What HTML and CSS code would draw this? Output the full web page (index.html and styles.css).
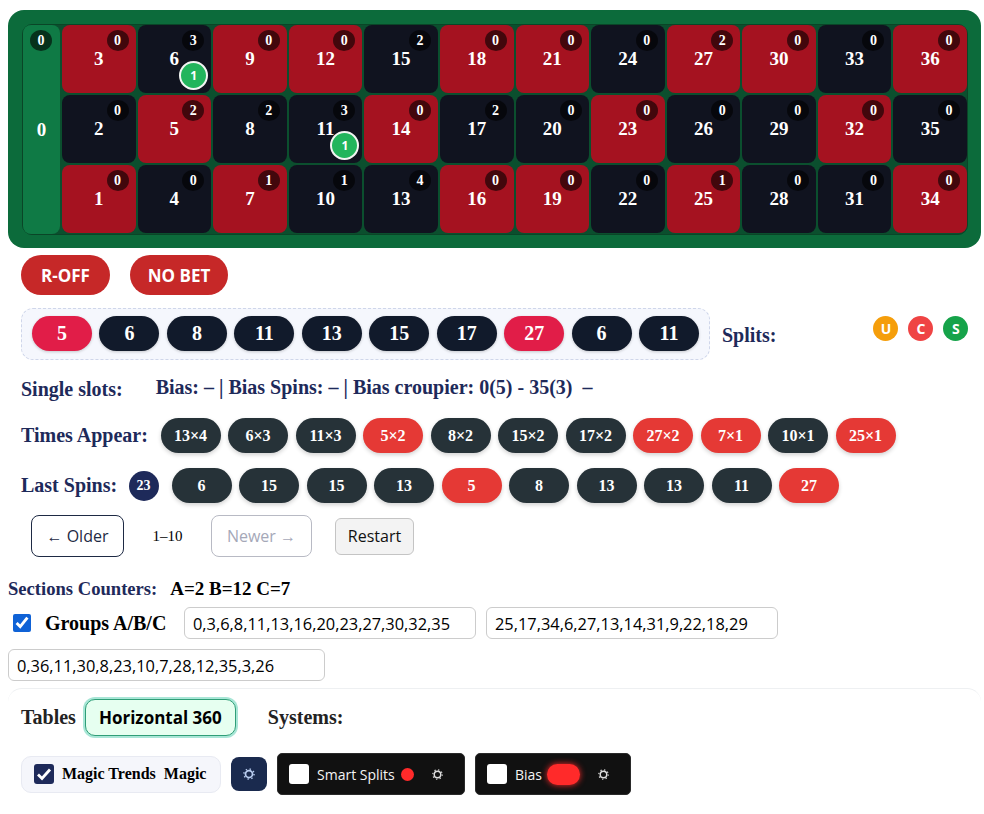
FILE: index.html
```html
<!DOCTYPE html>
<html lang="en">
<head>
    <meta charset="UTF-8">
    <meta name="viewport" content="width=device-width, initial-scale=1.0">
    <title>Roulette Tracker</title>
    <link rel="stylesheet" href="styles.css">
</head>
<body>
    <div class="board">
        <div class="board-inner">
            <div class="zero"><span class="badge zero-badge">0</span>0</div>
            <div class="numbers">
                <div class="cell red">3<span class="badge">0</span></div>
                <div class="cell black">6<span class="badge">3</span><span class="marker">1</span></div>
                <div class="cell red">9<span class="badge">0</span></div>
                <div class="cell red">12<span class="badge">0</span></div>
                <div class="cell black">15<span class="badge">2</span></div>
                <div class="cell red">18<span class="badge">0</span></div>
                <div class="cell red">21<span class="badge">0</span></div>
                <div class="cell black">24<span class="badge">0</span></div>
                <div class="cell red">27<span class="badge">2</span></div>
                <div class="cell red">30<span class="badge">0</span></div>
                <div class="cell black">33<span class="badge">0</span></div>
                <div class="cell red">36<span class="badge">0</span></div>

                <div class="cell black">2<span class="badge">0</span></div>
                <div class="cell red">5<span class="badge">2</span></div>
                <div class="cell black">8<span class="badge">2</span></div>
                <div class="cell black">11<span class="badge">3</span><span class="marker">1</span></div>
                <div class="cell red">14<span class="badge">0</span></div>
                <div class="cell black">17<span class="badge">2</span></div>
                <div class="cell black">20<span class="badge">0</span></div>
                <div class="cell red">23<span class="badge">0</span></div>
                <div class="cell black">26<span class="badge">0</span></div>
                <div class="cell black">29<span class="badge">0</span></div>
                <div class="cell red">32<span class="badge">0</span></div>
                <div class="cell black">35<span class="badge">0</span></div>

                <div class="cell red">1<span class="badge">0</span></div>
                <div class="cell black">4<span class="badge">0</span></div>
                <div class="cell red">7<span class="badge">1</span></div>
                <div class="cell black">10<span class="badge">1</span></div>
                <div class="cell black">13<span class="badge">4</span></div>
                <div class="cell red">16<span class="badge">0</span></div>
                <div class="cell red">19<span class="badge">0</span></div>
                <div class="cell black">22<span class="badge">0</span></div>
                <div class="cell red">25<span class="badge">1</span></div>
                <div class="cell black">28<span class="badge">0</span></div>
                <div class="cell black">31<span class="badge">0</span></div>
                <div class="cell red">34<span class="badge">0</span></div>
            </div>
        </div>
    </div>

    <div class="actions">
        <button class="action-btn off-btn">R-OFF</button>
        <button class="action-btn nobet-btn">NO BET</button>
    </div>

    <div class="slots-row">
        <div class="slots-panel">
            <span class="slot hot">5</span>
            <span class="slot">6</span>
            <span class="slot">8</span>
            <span class="slot">11</span>
            <span class="slot">13</span>
            <span class="slot">15</span>
            <span class="slot">17</span>
            <span class="slot hot">27</span>
            <span class="slot">6</span>
            <span class="slot">11</span>
        </div>
        <span class="heading splits-label">Splits:</span>
        <div class="ucs">
            <span class="dot dot-u">U</span>
            <span class="dot dot-c">C</span>
            <span class="dot dot-s">S</span>
        </div>
    </div>

    <div class="single-row">
        <span class="heading">Single slots:</span>
        <span class="heading bias-text">Bias: – | Bias Spins: – | Bias croupier: 0(5) - 35(3) &nbsp;–</span>
    </div>

    <div class="pill-row times-row">
        <span class="heading times-label">Times Appear:</span>
        <span class="pill">13×4</span>
        <span class="pill">6×3</span>
        <span class="pill">11×3</span>
        <span class="pill pill-red">5×2</span>
        <span class="pill">8×2</span>
        <span class="pill">15×2</span>
        <span class="pill">17×2</span>
        <span class="pill pill-red">27×2</span>
        <span class="pill pill-red">7×1</span>
        <span class="pill">10×1</span>
        <span class="pill pill-red">25×1</span>
    </div>

    <div class="pill-row spins-row">
        <span class="heading spins-label">Last Spins:</span>
        <span class="current">23</span>
        <span class="pill">6</span>
        <span class="pill">15</span>
        <span class="pill">15</span>
        <span class="pill">13</span>
        <span class="pill pill-red">5</span>
        <span class="pill">8</span>
        <span class="pill">13</span>
        <span class="pill">13</span>
        <span class="pill">11</span>
        <span class="pill pill-red">27</span>
    </div>

    <div class="pager">
        <button class="page-btn older">← Older</button>
        <span class="page-info">1–10</span>
        <button class="page-btn newer">Newer →</button>
        <button class="restart">Restart</button>
    </div>

    <div class="sections">
        <span class="heading sections-label">Sections Counters:</span>
        <span class="section-values">A=2 B=12 C=7</span>
    </div>

    <div class="groups">
        <input type="checkbox" class="groups-check" checked>
        <span class="groups-label">Groups A/B/C</span>
        <input type="text" class="group-input first" value="0,3,6,8,11,13,16,20,23,27,30,32,35">
        <input type="text" class="group-input second" value="25,17,34,6,27,13,14,31,9,22,18,29">
        <input type="text" class="group-input third" value="0,36,11,30,8,23,10,7,28,12,35,3,26">
    </div>

    <div class="bottom">
        <div class="tables-row">
            <span class="tables-label">Tables</span>
            <button class="table-btn">Horizontal 360</button>
            <span class="tables-label systems-label">Systems:</span>
        </div>
        <div class="systems-row">
            <label class="magic">
                <span class="magic-check">
                    <svg width="20" height="20" viewBox="0 0 20 20"><path d="M4 10.5l4 4 8-9" fill="none" stroke="#fff" stroke-width="2.8"/></svg>
                </span>
                <span>Magic Trends</span>
                <span>Magic</span>
            </label>
            <button class="gear-btn">
                <svg width="14" height="14" viewBox="0 0 16 16"><circle cx="8" cy="8" r="4" fill="none" stroke="#b9cdf0" stroke-width="2"/><circle cx="8" cy="8" r="5.8" fill="none" stroke="#b9cdf0" stroke-width="1.6" stroke-dasharray="1.6 2.95"/></svg>
            </button>
            <div class="system smart">
                <span class="system-check"></span>
                <span class="system-name">Smart Splits</span>
                <span class="led"></span>
                <svg class="system-gear" width="13" height="13" viewBox="0 0 16 16"><circle cx="8" cy="8" r="4" fill="none" stroke="#ddd" stroke-width="1.8"/><circle cx="8" cy="8" r="5.8" fill="none" stroke="#ddd" stroke-width="1.4" stroke-dasharray="1.6 2.95"/></svg>
            </div>
            <div class="system bias">
                <span class="system-check"></span>
                <span class="system-name">Bias</span>
                <span class="led led-wide"></span>
                <svg class="system-gear" width="13" height="13" viewBox="0 0 16 16"><circle cx="8" cy="8" r="4" fill="none" stroke="#ddd" stroke-width="1.8"/><circle cx="8" cy="8" r="5.8" fill="none" stroke="#ddd" stroke-width="1.4" stroke-dasharray="1.6 2.95"/></svg>
            </div>
        </div>
    </div>
</body>
</html>
```

FILE: styles.css
```css
:root {
    --navy: #1e2a5a;
    --slate: #263238;
    --red-pill: #e53935;
}

* {
    box-sizing: border-box;
}

body {
    margin: 0;
    padding: 10px 3px 0 8px;
    background: #fff;
    color: #000;
    font-family: "Liberation Serif", "Times New Roman", serif;
}

button {
    font-family: "Open Sans", sans-serif;
    cursor: pointer;
}

.heading {
    color: var(--navy);
    font-weight: bold;
    font-size: 20px;
}

/* board */
.board {
    background: #0c6b3b;
    border-radius: 16px;
    padding: 14px 13px 13px 14px;
    height: 238px;
}

.board-inner {
    display: flex;
    gap: 2px;
    height: 211px;
    background: #0b4f2e;
    border: 1px solid #0a4527;
    border-radius: 10px;
}

.zero {
    position: relative;
    width: 37px;
    display: flex;
    align-items: center;
    justify-content: center;
    background: #0f7a45;
    border-radius: 8px;
    color: #fff;
    font-size: 19px;
    font-weight: bold;
}

.numbers {
    flex: 1;
    display: grid;
    grid-template-columns: repeat(12, 1fr);
    grid-template-rows: repeat(3, 68px);
    gap: 2px;
}

.cell {
    position: relative;
    display: flex;
    align-items: center;
    justify-content: center;
    border-radius: 8px;
    color: #fff;
    font-size: 19px;
    font-weight: bold;
}

.cell.red {
    background: #a51220;
}

.cell.black {
    background: #10131f;
}

.badge {
    position: absolute;
    top: 5px;
    right: 7px;
    width: 22px;
    height: 21px;
    display: flex;
    align-items: center;
    justify-content: center;
    border-radius: 50%;
    background: rgba(0, 0, 0, 0.6);
    color: #fff;
    font-size: 14px;
}

.zero-badge {
    top: 5px;
    right: 8px;
}

.marker {
    position: absolute;
    right: 3px;
    bottom: 3px;
    width: 29px;
    height: 29px;
    display: flex;
    align-items: center;
    justify-content: center;
    border: 2px solid #f2f5f2;
    border-radius: 50%;
    background: #22b55c;
    color: #fff;
    font-family: "Open Sans", sans-serif;
    font-size: 12px;
}

/* actions */
.actions {
    display: flex;
    gap: 20px;
    margin: 7px 0 0 13px;
}

.action-btn {
    height: 40px;
    padding: 0;
    border: none;
    border-radius: 20px;
    background: #c62828;
    color: #fff;
    font-size: 17px;
    font-weight: bold;
}

.off-btn {
    width: 89px;
}

.nobet-btn {
    width: 98px;
}

/* slots */
.slots-row {
    display: flex;
    align-items: center;
    margin: 13px 0 0 13px;
}

.slots-panel {
    display: flex;
    gap: 7.5px;
    width: 689px;
    height: 52px;
    padding: 7px 10px;
    background: #f5f7fd;
    border: 1px dashed #cfd6ea;
    border-radius: 12px;
}

.slot {
    width: 60px;
    height: 35px;
    display: flex;
    align-items: center;
    justify-content: center;
    border-radius: 18px;
    background: #111a2b;
    color: #fff;
    font-size: 20px;
    font-weight: bold;
    box-shadow: 0 1px 3px rgba(0, 0, 0, 0.2);
}

.slot.hot {
    background: #e11d48;
}

.splits-label {
    margin-left: 12px;
    padding-top: 3px;
}

.ucs {
    display: flex;
    gap: 10px;
    margin: -12px 0 0 97px;
}

.dot {
    width: 25px;
    height: 25px;
    display: flex;
    align-items: center;
    justify-content: center;
    border-radius: 50%;
    color: #fff;
    font-family: "Open Sans", sans-serif;
    font-size: 14px;
    font-weight: bold;
}

.dot-u {
    background: #f59e0b;
}

.dot-c {
    background: #ef4444;
}

.dot-s {
    background: #16a34a;
}

/* single slots */
.single-row {
    display: flex;
    align-items: baseline;
    margin: 18px 0 0 13px;
}

.bias-text {
    margin-left: 33px;
    position: relative;
    top: -2px;
}

/* pills */
.pill-row {
    display: flex;
    align-items: center;
    gap: 7.5px;
    margin-left: 13px;
}

.times-row {
    margin-top: 17px;
}

.spins-row {
    margin-top: 15px;
}

.times-label {
    width: 132px;
}

.spins-label {
    width: 100px;
}

.pill {
    width: 60px;
    height: 35px;
    display: flex;
    align-items: center;
    justify-content: center;
    border-radius: 18px;
    background: var(--slate);
    color: #fff;
    font-size: 16px;
    font-weight: bold;
    box-shadow: 0 2px 4px rgba(0, 0, 0, 0.18);
}

.pill-red {
    background: var(--red-pill);
}

.current {
    width: 30px;
    height: 30px;
    margin-right: 5.5px;
    display: flex;
    align-items: center;
    justify-content: center;
    border-radius: 50%;
    background: var(--navy);
    color: #fff;
    font-size: 14px;
    font-weight: bold;
}

/* pager */
.pager {
    display: flex;
    align-items: center;
    margin: 12px 0 0 23px;
}

.page-btn {
    height: 42px;
    background: #fff;
    border-radius: 8px;
    font-size: 16px;
}

.older {
    width: 93px;
    border: 1px solid #1e2a44;
    color: #1e2a44;
}

.page-info {
    width: 87px;
    text-align: center;
    font-size: 15px;
}

.newer {
    width: 101px;
    border: 1px solid #b8bac4;
    color: #a5a8b8;
}

.restart {
    width: 79px;
    height: 37px;
    margin-left: 23px;
    background: #f3f3f3;
    border: 1px solid #c4c4c4;
    border-radius: 6px;
    color: #111;
    font-size: 16px;
}

/* sections and groups */
.sections {
    display: flex;
    align-items: baseline;
    gap: 13px;
    margin-top: 21px;
}

.sections-label {
    font-size: 18.6px;
}

.section-values {
    font-size: 19px;
    font-weight: bold;
}

.groups {
    display: flex;
    flex-wrap: wrap;
    align-items: center;
    row-gap: 10px;
    margin-top: 7px;
}

.groups-check {
    width: 18px;
    height: 18px;
    margin: 0 0 0 5px;
    accent-color: #0f62d6;
}

.groups-label {
    margin-left: 14px;
    width: 139px;
    font-size: 20px;
    font-weight: bold;
}

.group-input {
    height: 32px;
    padding: 0 8px;
    border: 1px solid #ccc;
    border-radius: 6px;
    color: #000;
    font-family: "Open Sans", sans-serif;
    font-size: 16.4px;
}

.first {
    width: 292px;
}

.second {
    width: 292px;
    margin-left: 10px;
}

.third {
    width: 317px;
}

/* bottom */
.bottom {
    margin-top: 7px;
    padding: 10px 13px 0;
    border-top: 1px solid #eef0f2;
    border-radius: 14px;
}

.tables-row {
    display: flex;
    align-items: center;
}

.tables-label {
    color: #222;
    font-size: 20px;
    font-weight: bold;
}

.table-btn {
    width: 151px;
    height: 37px;
    margin-left: 9px;
    background: #e6fff0;
    border: 1px solid #2f9e77;
    border-radius: 10px;
    box-shadow: 0 0 0 2px #a8e6d6;
    color: #000;
    font-size: 17px;
    font-weight: bold;
}

.systems-label {
    margin-left: 32px;
}

.systems-row {
    display: flex;
    align-items: center;
    gap: 10px;
    margin-top: 17px;
}

.magic {
    display: flex;
    align-items: center;
    gap: 8px;
    width: 200px;
    height: 37px;
    padding-left: 12px;
    background: #f5f6fb;
    border: 1px solid #e8eaf2;
    border-radius: 10px;
    font-size: 16px;
    font-weight: bold;
}

.magic-check {
    width: 20px;
    height: 20px;
    background: var(--navy);
    border-radius: 3px;
}

.gear-btn {
    width: 36px;
    height: 34px;
    display: flex;
    align-items: center;
    justify-content: center;
    padding: 0;
    background: #1a2a4e;
    border: none;
    border-radius: 8px;
}

.system {
    display: flex;
    align-items: center;
    height: 42px;
    padding-left: 11px;
    background: #111;
    border: 1px solid #2a2a2a;
    border-radius: 5px;
    color: #f4f4f4;
    font-family: "Open Sans", sans-serif;
    font-size: 14px;
}

.smart {
    width: 188px;
}

.bias {
    width: 156px;
}

.system-check {
    width: 20px;
    height: 20px;
    background: #fff;
    border-radius: 3px;
}

.system-name {
    margin-left: 8px;
}

.led {
    width: 13px;
    height: 13px;
    margin-left: 6px;
    border-radius: 50%;
    background: #ff2a2a;
}

.led-wide {
    width: 33px;
    height: 21px;
    margin-left: 5px;
    border-radius: 11px;
    box-shadow: 0 0 6px #ff2a2a;
}

.system-gear {
    margin-left: 17px;
}

.bias .system-gear {
    margin-left: 17px;
}
```
